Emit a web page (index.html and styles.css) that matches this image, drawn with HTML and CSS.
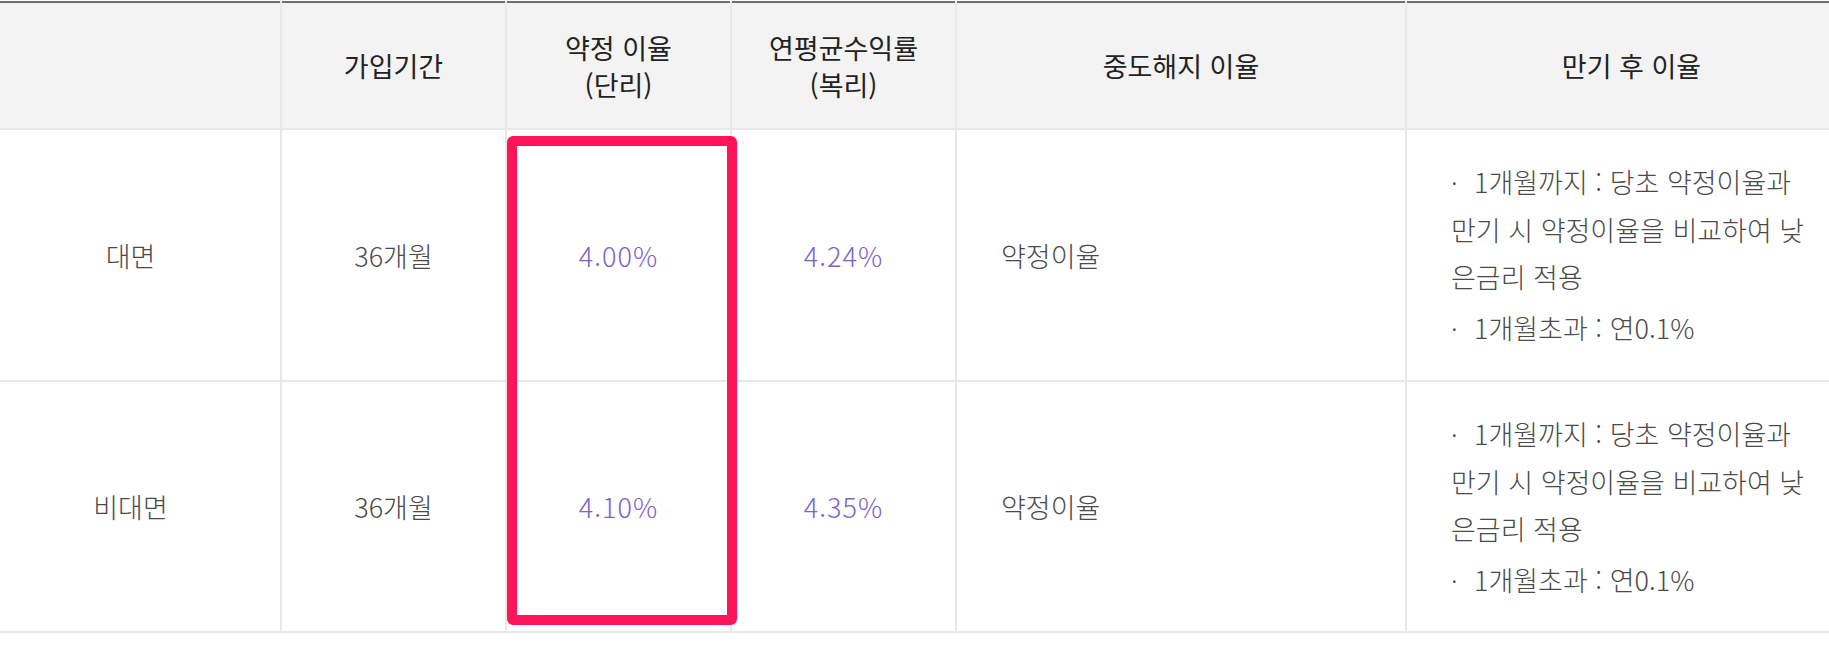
FILE: index.html
```html
<!DOCTYPE html>
<html lang="ko">
<head>
<meta charset="utf-8">
<title>금리 안내</title>
<link rel="stylesheet" href="styles.css">
</head>
<body>
<div class="wrap">
  <table class="rate">
    <colgroup>
      <col class="c1"><col class="c2"><col class="c3"><col class="c4"><col class="c5"><col class="c6">
    </colgroup>
    <thead>
      <tr>
        <th></th>
        <th>가입기간</th>
        <th>약정 이율<br>(단리)</th>
        <th>연평균수익률<br>(복리)</th>
        <th>중도해지 이율</th>
        <th>만기 후 이율</th>
      </tr>
    </thead>
    <tbody>
      <tr class="r1">
        <td>대면</td>
        <td>36개월</td>
        <td class="pct">4.00%</td>
        <td class="pct">4.24%</td>
        <td class="left">약정이율</td>
        <td class="left">
          <ul class="notes">
            <li><span class="dot">·</span>1개월까지 : 당초 약정이율과<br>만기 시 약정이율을 비교하여 낮<br>은금리 적용</li>
            <li><span class="dot">·</span>1개월초과 : 연0.1%</li>
          </ul>
        </td>
      </tr>
      <tr class="r2">
        <td>비대면</td>
        <td>36개월</td>
        <td class="pct">4.10%</td>
        <td class="pct">4.35%</td>
        <td class="left">약정이율</td>
        <td class="left">
          <ul class="notes">
            <li><span class="dot">·</span>1개월까지 : 당초 약정이율과<br>만기 시 약정이율을 비교하여 낮<br>은금리 적용</li>
            <li><span class="dot">·</span>1개월초과 : 연0.1%</li>
          </ul>
        </td>
      </tr>
    </tbody>
  </table>
  <div class="highlight"></div>
</div>
</body>
</html>
```
FILE: styles.css
```css
html, body {
  margin: 0;
  padding: 0;
  background: #ffffff;
}
body {
  font-family: "Noto Sans CJK KR", "Noto Sans", sans-serif;
  font-size: 27px;
  color: #4a4a4a;
}
.wrap {
  position: relative;
  width: 100%;
  overflow: hidden;
  padding-top: 1px;
}
.rate {
  width: 1875px;
  margin-left: -19px;
  border-collapse: collapse;
  table-layout: fixed;
  border-top: 2px solid #6e6e6e;
}
.c1 { width: 300px; }
.c2, .c3, .c4 { width: 225px; }
.c5 { width: 450px; }
.c6 { width: 450px; }

.rate th,
.rate td {
  padding: 0;
  text-align: center;
  vertical-align: middle;
  border-bottom: 2px solid #e8e8e8;
  border-left: 2px solid #e8e8e8;
}
.rate th:first-child,
.rate td:first-child {
  border-left: 0;
}
.rate thead tr { height: 127px; }
.rate th {
  background: #f3f3f3;
  color: #222222;
  font-weight: 400;
  line-height: 37px;
}
.r1 { height: 252px; }
.r2 { height: 251px; }
.rate td {
  font-weight: 300;
}
.rate td.pct {
  color: #7a64c6;
  letter-spacing: 1px;
}
.rate td.left {
  text-align: left;
  padding: 0 20px 0 44px;
  white-space: nowrap;
}
.notes {
  list-style: none;
  margin: 0;
  padding: 0;
  line-height: 47px;
}
.notes li + li {
  margin-top: 4px;
}
.dot {
  font-family: "Noto Sans", sans-serif;
  display: inline-block;
  width: 23px;
}
.highlight {
  position: absolute;
  left: 507px;
  top: 136px;
  width: 210px;
  height: 469px;
  border: 10px solid #ff1459;
  border-radius: 6px;
}
```
